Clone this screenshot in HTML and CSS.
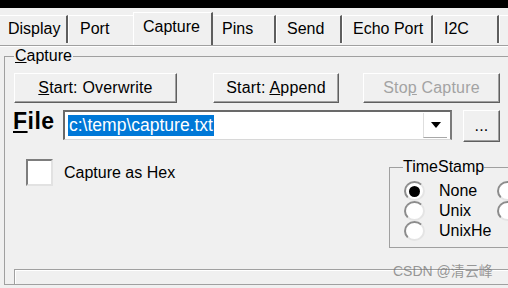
FILE: index.html
```html
<!DOCTYPE html>
<html>
<head>
<meta charset="utf-8">
<link rel="stylesheet" href="styles.css">
</head>
<body>
<div class="screen">
  <div class="topbar"></div>
  <div class="tabs">
    <div class="tab t-display">Display</div>
    <div class="tab t-port">Port</div>
    <div class="tab tab-active t-capture">Capture</div>
    <div class="tab t-pins">Pins</div>
    <div class="tab t-send">Send</div>
    <div class="tab t-echo">Echo Port</div>
    <div class="tab t-i2c">I2C</div>
    <div class="tab t-rest"></div>
  </div>
  <div class="tabline"></div>
  <fieldset class="group">
    <legend class="group-title"><u>C</u>apture</legend>
    <div class="btn-row">
      <div class="btn b-over"><span><u>S</u>tart: Overwrite</span></div>
      <div class="btn b-append"><span>Start: <u>A</u>ppend</span></div>
      <div class="btn b-stop disabled"><span>Sto<u>p</u> Capture</span></div>
    </div>
    <div class="file-row">
      <span class="file-label"><u>F</u>ile</span>
      <div class="combo">
        <span class="combo-text">c:\temp\capture.txt</span>
        <span class="combo-arrow"><span class="tri"></span></span>
      </div>
      <div class="btn b-browse"><span>...</span></div>
    </div>
    <div class="lower-row">
      <div class="check"><span class="check-box"></span><span class="check-label">Capture as Hex</span></div>
      <fieldset class="ts">
        <legend class="ts-title">TimeStamp</legend>
        <div class="radio-grid">
          <div class="radio-item"><span class="radio checked"></span><span>None</span></div>
          <div class="radio-item"><span class="radio"></span><span></span></div>
          <div class="radio-item"><span class="radio"></span><span>Unix</span></div>
          <div class="radio-item"><span class="radio"></span><span></span></div>
          <div class="radio-item"><span class="radio"></span><span>UnixHe</span></div>
        </div>
      </fieldset>
    </div>
    <div class="status"></div>
  </fieldset>
  <div class="watermark">CSDN @清云峰</div>
</div>
</body>
</html>
```

FILE: styles.css
```css
html, body {
  margin: 0;
  padding: 0;
  background: #f0f0f0;
}
.screen {
  position: relative;
  width: 508px;
  height: 288px;
  overflow: hidden;
  background: #f0f0f0;
  font-family: "Liberation Sans", Arial, sans-serif;
  font-size: 16px;
  color: #000;
}
.topbar {
  height: 8px;
  background: #000;
}
.tabs {
  display: flex;
  align-items: flex-end;
  height: 37px;
}
.tab {
  box-sizing: border-box;
  height: 28px;
  margin-bottom: 2px;
  border-top: 1px solid #fff;
  border-left: 1px solid #fff;
  border-right: 2px solid #5e5e5e;
  line-height: 26px;
  white-space: nowrap;
  padding-left: 10px;
  flex: none;
}
.t-display { width: 68px; border-left: none; padding-left: 8px; }
.t-port { width: 65px; border-right: none; padding-left: 11px; }
.t-capture {
  width: 80px;
  height: 33px;
  margin-bottom: 0;
  line-height: 28px;
  padding-left: 9px;
}
.t-pins { width: 63px; border-left: none; padding-left: 9px; }
.t-send { width: 66px; }
.t-echo { width: 91px; }
.t-i2c { width: 66px; }
.t-rest { width: 9px; border-right: none; }
.tabline {
  height: 1px;
  border-top: 1px solid #a0a0a0;
  background: #fff;
}
.group {
  box-sizing: border-box;
  width: 540px;
  margin: 0 0 0 4px;
  padding: 0;
  border: 1px solid #a0a0a0;
  border-right: none;
  min-width: 0;
}
.group-title {
  margin-left: 9px;
  padding: 0 1px;
  line-height: 18px;
  font-size: 16px;
}
.btn-row {
  display: flex;
  margin-top: 8px;
}
.btn {
  box-sizing: border-box;
  height: 30px;
  display: flex;
  align-items: center;
  justify-content: center;
  background: #f0f0f0;
  border: 1px solid;
  border-color: #fff #5f5f5f #5f5f5f #fff;
  box-shadow: inset -1px -1px 0 #a0a0a0;
  white-space: nowrap;
  letter-spacing: 0.2px;
  flex: none;
}
.b-over { width: 163px; margin-left: 9px; }
.b-append { width: 126px; margin-left: 36px; }
.b-stop { width: 137px; margin-left: 24px; }
.disabled { color: #a3a3a3; }
.file-row {
  display: flex;
  align-items: flex-start;
  margin-top: 7px;
  height: 32px;
}
.file-label {
  width: 50px;
  margin-left: 8px;
  font-size: 23px;
  font-weight: bold;
  line-height: 22px;
  letter-spacing: 0.5px;
}
.combo {
  box-sizing: border-box;
  width: 389px;
  height: 30px;
  display: flex;
  align-items: center;
  background: #fff;
  border-top: 2px solid #696969;
  border-left: 2px solid #696969;
  border-right: 2px solid #7a7a7a;
  border-bottom: 1px solid #d8d8d8;
  padding-left: 3px;
  padding-right: 3px;
}
.combo-text {
  background: #0078d7;
  color: #fff;
  font-size: 17.5px;
  line-height: 21px;
  padding: 0 1px;
  white-space: nowrap;
}
.combo-arrow {
  box-sizing: border-box;
  margin-left: auto;
  width: 24px;
  height: 25px;
  display: flex;
  align-items: center;
  justify-content: center;
  border-left: 1px solid #dedede;
  border-bottom: 1px solid #a8a8a8;
}
.tri {
  width: 0;
  height: 0;
  border-left: 5px solid transparent;
  border-right: 5px solid transparent;
  border-top: 6px solid #000;
}
.b-browse {
  width: 37px;
  height: 32px;
  margin-left: 11px;
}
.lower-row {
  display: grid;
  grid-template-columns: 384px 150px;
  margin-top: 16px;
}
.check {
  display: flex;
  align-items: center;
  height: 27px;
  margin-top: 1px;
  margin-left: 21px;
}
.check-box {
  box-sizing: border-box;
  width: 27px;
  height: 27px;
  background: #fff;
  border: 2px solid;
  border-color: #7d7d7d #e2e2e2 #e2e2e2 #7d7d7d;
  margin-right: 11px;
}
.ts {
  box-sizing: border-box;
  height: 90px;
  margin: 0;
  padding: 0;
  border: 1px solid #a0a0a0;
  border-right: none;
  min-width: 0;
}
.ts-title {
  margin-left: 13px;
  padding: 0;
  line-height: 18px;
}
.radio-grid {
  display: grid;
  grid-template-columns: 93px 93px;
  grid-auto-rows: 20px;
  padding-top: 5px;
  padding-left: 14px;
}
.radio-item {
  display: flex;
  align-items: center;
  white-space: nowrap;
}
.radio {
  box-sizing: border-box;
  width: 21px;
  height: 20px;
  border-radius: 50%;
  background: #fff;
  border: 2px solid;
  border-color: #8c8c8c #e4e4e4 #e4e4e4 #8c8c8c;
  margin-right: 14px;
  display: flex;
  align-items: center;
  justify-content: center;
  flex: none;
}
.radio.checked::after {
  content: "";
  width: 11px;
  height: 11px;
  border-radius: 50%;
  background: #000;
}
.status {
  box-sizing: border-box;
  height: 15px;
  margin-top: 21px;
  margin-left: 9px;
  border-top: 1px solid #a0a0a0;
  border-left: 1px solid #a0a0a0;
  box-shadow: inset 1px 1px 0 #fff;
}
.watermark {
  position: absolute;
  left: 393px;
  top: 262px;
  font-family: "Liberation Sans", "Noto Sans CJK SC", sans-serif;
  font-size: 14px;
  line-height: 18px;
  color: rgba(110, 110, 110, 0.7);
  white-space: nowrap;
}
```
